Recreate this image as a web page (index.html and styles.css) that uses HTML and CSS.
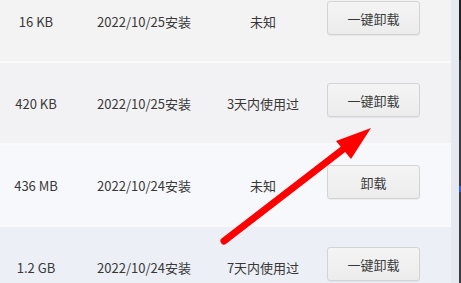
FILE: index.html
```html
<!DOCTYPE html>
<html lang="zh-cn">
<head>
    <meta charset="UTF-8">
    <meta name="viewport" content="width=device-width, initial-scale=1.0">
    <title>应用列表</title>
    <link rel="stylesheet" href="styles.css">
</head>
<body>
    <div class="page">
        <!-- 应用列表 -->
        <div class="list">
            <div class="row row-a">
                <div class="size">16 KB</div>
                <div class="date">2022/10/25安装</div>
                <div class="status">未知</div>
                <button class="uninstall">一键卸载</button>
            </div>
            <div class="row row-b">
                <div class="size">420 KB</div>
                <div class="date">2022/10/25安装</div>
                <div class="status">3天内使用过</div>
                <button class="uninstall">一键卸载</button>
            </div>
            <div class="row row-c">
                <div class="size">436 MB</div>
                <div class="date">2022/10/24安装</div>
                <div class="status">未知</div>
                <button class="uninstall">卸载</button>
            </div>
            <div class="row row-d">
                <div class="size">1.2 GB</div>
                <div class="date">2022/10/24安装</div>
                <div class="status">7天内使用过</div>
                <button class="uninstall">一键卸载</button>
            </div>
        </div>
        <div class="track"></div>
        <div class="edge"><span class="edge-mark"></span></div>
    </div>

    <!-- 红色箭头标注 -->
    <svg class="arrow" width="461" height="283" viewBox="0 0 461 283">
        <line x1="224" y1="241" x2="346" y2="147" stroke="#ff0000" stroke-width="7" stroke-linecap="round"/>
        <polygon points="371,128 336,141 351,159" fill="#ff0000"/>
    </svg>
</body>
</html>
```

FILE: styles.css
```css
body {
    margin: 0;
    padding: 0;
    background-color: #f3f3f3;
    font-family: "Noto Sans CJK SC", "Noto Sans", sans-serif;
    font-size: 13px;
    color: #383838;
    overflow: hidden;
}
.page {
    display: flex;
    height: 283px;
    overflow: hidden;
}
.list {
    width: 451px;
    height: 302px;
    margin-top: -19px; /* 列表已滚动 */
    overflow: hidden;
}
.row {
    display: flex;
    align-items: center;
    height: 80px;
    border-bottom: 2px solid #fafafa;
}
.row-a { background-color: #f3f3f3; }
.row-b { background-color: #f2f2f4; }
.row-c { background-color: #f7f8fb; }
.row-d { background-color: #eceff5; }
.size {
    width: 72px;
    text-align: center;
}
.date {
    width: 144px;
    text-align: center;
}
.status {
    width: 94px;
    text-align: center;
}
.uninstall {
    width: 93px;
    height: 34px;
    margin-left: 17px;
    margin-bottom: 6px;
    background: linear-gradient(#f4f4f4, #ececec);
    border: 1px solid #d3d3d3;
    border-radius: 3px;
    box-shadow: 0 1px 1px rgba(0, 0, 0, 0.05);
    font-family: inherit;
    font-size: 13px;
    color: #383838;
    padding: 0;
}
.track {
    width: 8px;
    background-color: #e6e9f0;
}
.edge {
    width: 2px;
    background: linear-gradient(#222 0, #222 60px, #3a3d44 60px);
    position: relative;
}
.edge-mark {
    position: absolute;
    top: 186px;
    left: 0;
    width: 2px;
    height: 6px;
    background-color: #2f5bd8;
}
.arrow {
    position: absolute;
    top: 0;
    left: 0;
}
```
